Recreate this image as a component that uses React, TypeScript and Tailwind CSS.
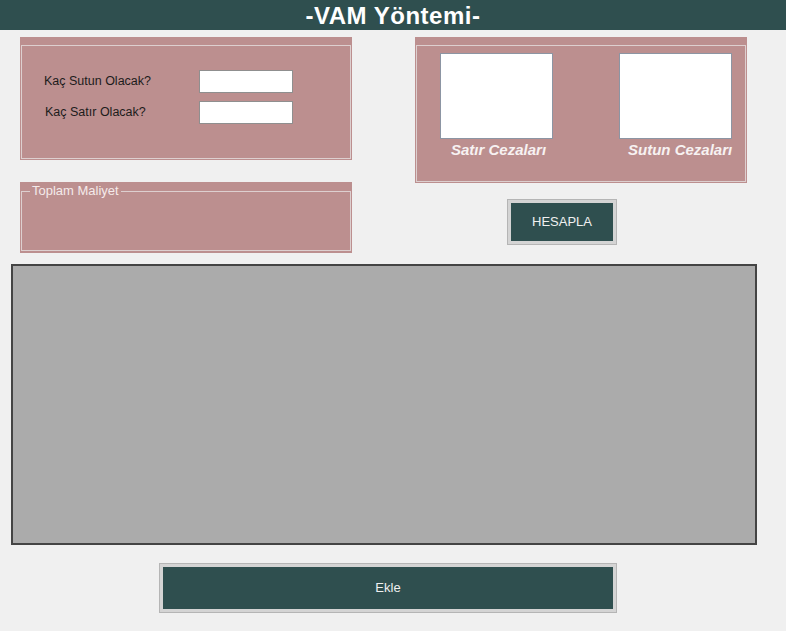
import React from 'react';

const GREEN = 'bg-[#2F4F4F]';

const App = () => {
  return (
    <div className="w-[786px] h-[631px] bg-[#F0F0F0] font-['Liberation_Sans',Arial,sans-serif] overflow-hidden">
      {/* baslik */}
      <div className={`${GREEN} h-[30px] flex justify-center pt-[4px]`}>
        <h1 className="text-white font-bold text-[24px] leading-none tracking-[0.5px]">-VAM Yöntemi-</h1>
      </div>

      <div className="flex pt-[7px] pl-[20px] gap-[63px]">
        {/* sol kolon */}
        <div className="w-[332px] flex flex-col">
          <div className="bg-[#BC8F8F] h-[123px] pt-[8px] px-[1px] pb-[1px]">
            <fieldset className="h-full border border-[#DDCFCF]">
              <div className="pt-[24px] pl-[22px] flex flex-col gap-[8px]">
                <div className="flex items-center">
                  <label className="w-[155px] text-[12.5px] text-[#1c1c1c]">Kaç Sutun Olacak?</label>
                  <input className="w-[94px] h-[23px] bg-white border border-[#8F8F8F] outline-none" />
                </div>
                <div className="flex items-center">
                  <label className="w-[155px] pl-[1px] text-[12.5px] text-[#1c1c1c]">Kaç Satır Olacak?</label>
                  <input className="w-[94px] h-[23px] bg-white border border-[#8F8F8F] outline-none" />
                </div>
              </div>
            </fieldset>
          </div>

          <div className="mt-[22px] bg-[#BC8F8F] h-[71px] px-[1px] pb-[2px]">
            <fieldset className="h-full border border-[#DDCFCF]">
              <legend className="ml-[8px] px-[2px] text-[13px] leading-[18px] text-[#F4EAEA]">Toplam Maliyet</legend>
            </fieldset>
          </div>
        </div>

        {/* sag kolon */}
        <div className="w-[332px] flex flex-col">
          <div className="bg-[#BC8F8F] h-[146px] pt-[8px] px-[1px] pb-[1px]">
            <fieldset className="h-full border border-[#DDCFCF]">
              <div className="pt-[7px] pl-[23px] flex gap-[66px]">
                <div className="w-[113px] flex flex-col">
                  <div className="h-[86px] bg-white border border-[#8C95A3]" />
                  <span className="mt-[2px] pl-[11px] text-[15px] leading-[17px] font-bold italic text-[#F7F2F2]">Satır Cezaları</span>
                </div>
                <div className="w-[113px] flex flex-col">
                  <div className="h-[86px] bg-white border border-[#8C95A3]" />
                  <span className="mt-[2px] pl-[9px] text-[15px] leading-[17px] font-bold italic whitespace-nowrap text-[#F7F2F2]">Sutun Cezaları</span>
                </div>
              </div>
            </fieldset>
          </div>

          <button className={`mt-[17px] ml-[93px] w-[108px] h-[44px] ${GREEN} border-[3px] border-[#D4D4D4] ring-1 ring-[#B5B5B5] text-[13px] text-[#F0F0F0]`}>
            HESAPLA
          </button>
        </div>
      </div>

      {/* tablo alani */}
      <div className="mt-[11px] ml-[11px] w-[746px] h-[281px] bg-[#ABABAB] border-2 border-[#444444]" />

      <button className={`mt-[19px] ml-[160px] w-[456px] h-[48px] ${GREEN} border-[3px] border-[#D4D4D4] ring-1 ring-[#B5B5B5] text-[13px] text-[#F0F0F0] block`}>
        Ekle
      </button>
    </div>
  );
};

export default App;
